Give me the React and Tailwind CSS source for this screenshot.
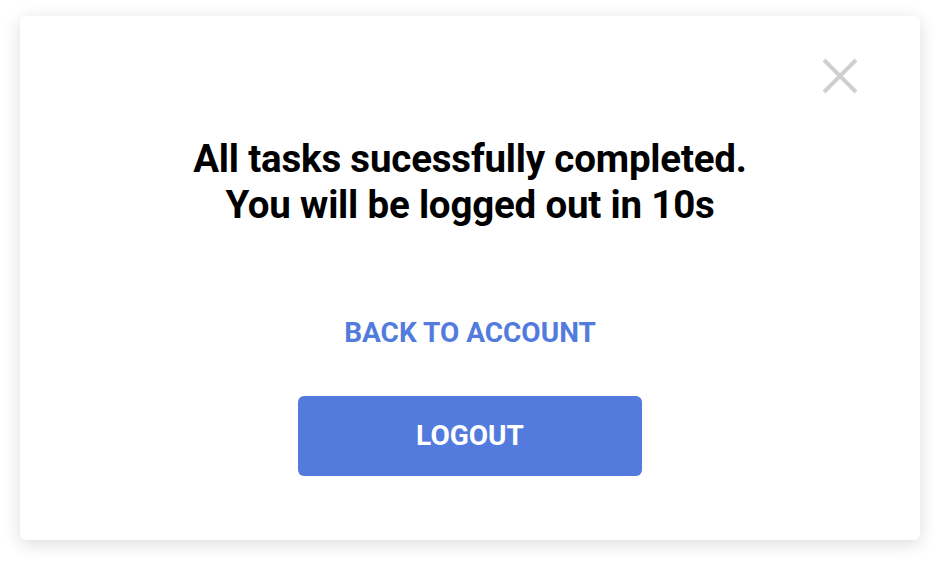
import React from 'react'

const CloseIcon = () => (
  <svg width="36" height="36" viewBox="0 0 36 36" fill="none">
    <path d="M2 2 L34 34 M34 2 L2 34" stroke="#cfcfcf" strokeWidth="4" />
  </svg>
)

const App = () => {
  return (
    <div
      className="w-[940px] h-[564px] bg-white pt-4 px-5"
      style={{ fontFamily: 'Roboto, "Liberation Sans", sans-serif' }}
    >
      <div className="relative h-[524px] bg-white rounded-md shadow-[0_4px_18px_rgba(0,0,0,0.14)] flex flex-col items-center">
        <button className="absolute top-[42px] right-[62px]">
          <CloseIcon />
        </button>
        <h1 className="mt-[120px] text-[38.5px] leading-[46px] font-bold text-black text-center tracking-[-0.2px]">
          All tasks sucessfully completed.
          <br />
          You will be logged out in 10s
        </h1>
        <button className="mt-[89px] text-[28px] font-bold text-[#527bdd] uppercase leading-[32px]">
          Back to account
        </button>
        <button className="mt-[47px] w-[344px] h-[80px] rounded-md bg-[#527bdd] text-white text-[28px] font-bold uppercase">
          Logout
        </button>
      </div>
    </div>
  )
}

export default App
